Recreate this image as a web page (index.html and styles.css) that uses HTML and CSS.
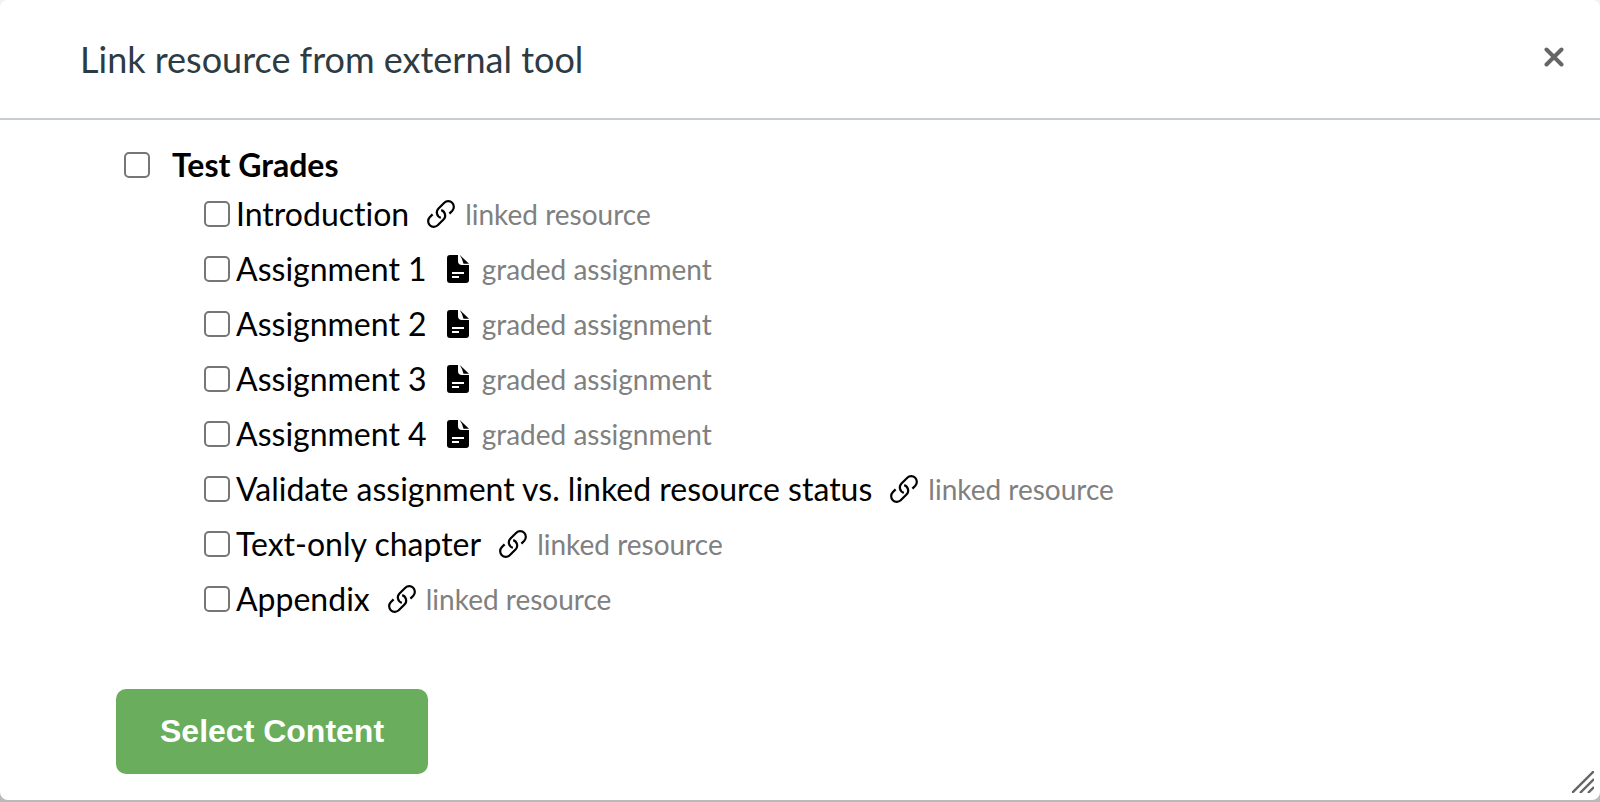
FILE: index.html
```html
<!DOCTYPE html>
<html lang="en">
<head>
<meta charset="utf-8">
<title>Link resource from external tool</title>
<link rel="stylesheet" href="styles.css">
</head>
<body>
<svg class="sprite" aria-hidden="true">
  <symbol id="link" viewBox="0 0 28 28">
    <g fill="none" stroke="currentColor" stroke-width="2.200">
      <path d="M5.600 14.400L2.700 17.300A5.660 5.660 0 0 0 10.700 25.300L16.500 19.500A5.660 5.660 0 0 0 14.200 10.100"/>
      <path d="M22.400 13.600L25.300 10.700A5.660 5.660 0 0 0 17.300 2.700L11.500 8.500A5.660 5.660 0 0 0 13.800 17.900"/>
    </g>
  </symbol>
  <symbol id="file" viewBox="0 0 22 28">
    <path fill="currentColor" fill-rule="evenodd" d="M3 0H11V6Q11 10 15 10H22V25Q22 28 19 28H3Q0 28 0 25V3Q0 0 3 0ZM5 17V19H17V17ZM5 21V23H12V21ZM12.800 0L22 8.800H16.500Q15.500 4 12.800 0Z"/>
  </symbol>
</svg>
<main class="dialog">
  <header class="dialog-header">
    <h1 class="dialog-title">Link resource from external tool</h1>
    <button class="close" type="button" aria-label="Close">
      <svg class="close-icon" viewBox="0 0 20 20"><path d="M2.500 2.500L17.500 17.500M17.500 2.500L2.500 17.500" stroke="currentColor" stroke-width="4" stroke-linecap="round"/></svg>
    </button>
  </header>
  <form class="content">
    <label class="group"><input class="check" type="checkbox"><span>Test Grades</span></label>
    <ul class="items">
      <li class="item"><label class="item-label"><input class="check" type="checkbox"><span>Introduction</span></label><svg class="link-icon"><use href="#link"/></svg><span class="kind">linked resource</span></li>
      <li class="item"><label class="item-label"><input class="check" type="checkbox"><span>Assignment 1</span></label><svg class="file-icon"><use href="#file"/></svg><span class="kind">graded assignment</span></li>
      <li class="item"><label class="item-label"><input class="check" type="checkbox"><span>Assignment 2</span></label><svg class="file-icon"><use href="#file"/></svg><span class="kind">graded assignment</span></li>
      <li class="item"><label class="item-label"><input class="check" type="checkbox"><span>Assignment 3</span></label><svg class="file-icon"><use href="#file"/></svg><span class="kind">graded assignment</span></li>
      <li class="item"><label class="item-label"><input class="check" type="checkbox"><span>Assignment 4</span></label><svg class="file-icon"><use href="#file"/></svg><span class="kind">graded assignment</span></li>
      <li class="item"><label class="item-label"><input class="check" type="checkbox"><span>Validate assignment vs. linked resource status</span></label><svg class="link-icon"><use href="#link"/></svg><span class="kind">linked resource</span></li>
      <li class="item"><label class="item-label"><input class="check" type="checkbox"><span>Text-only chapter</span></label><svg class="link-icon"><use href="#link"/></svg><span class="kind">linked resource</span></li>
      <li class="item"><label class="item-label"><input class="check" type="checkbox"><span>Appendix</span></label><svg class="link-icon"><use href="#link"/></svg><span class="kind">linked resource</span></li>
    </ul>
    <button class="submit" type="button">Select Content</button>
  </form>
  <svg class="grip" viewBox="0 0 22 22" aria-hidden="true"><path d="M0 22L22 0M8 22L22 8M16 22L22 16" stroke="#666" stroke-width="2.400"/></svg>
</main>
</body>
</html>
```
FILE: styles.css
```css
* { box-sizing: border-box; }
body {
  margin: 0;
  padding-bottom: 2px;
  background: linear-gradient(#f2f2f2, #b9b9b9);
  color: #000;
  font-family: Lato, sans-serif;
  font-variant-ligatures: no-common-ligatures;
}
.sprite { position: absolute; width: 0; height: 0; }
.dialog {
  position: relative;
  background: #fff;
  border-radius: 8px;
}
.dialog-header {
  display: flex;
  align-items: center;
  justify-content: space-between;
  height: 120px;
  padding: 0 36px 0 80px;
  border-bottom: 2px solid #c7cdd1;
}
.dialog-title {
  margin: 0;
  color: #2d3b45;
  font-size: 36px;
  font-weight: 400;
  line-height: 48px;
}
.close {
  display: flex;
  padding: 0;
  border: 0;
  margin-bottom: 4px;
  background: none;
  color: #666;
}
.close-icon { width: 20px; height: 20px; }
.content { padding: 23px 116px 26px; }
.group {
  display: flex;
  align-items: center;
  gap: 22px;
  height: 43px;
  padding-left: 8px;
  font-size: 32px;
  font-weight: 700;
}
.check {
  appearance: none;
  flex: none;
  width: 26px;
  height: 26px;
  margin: 0;
  border: 2px solid #767676;
  border-radius: 5px;
  background: #fff;
}
.items {
  margin: 0 0 63px;
  padding: 0 0 0 88px;
  list-style: none;
}
.item {
  display: flex;
  align-items: center;
  height: 55px;
}
.item-label {
  display: flex;
  align-items: center;
  gap: 6px;
  font-size: 32px;
}
.link-icon { width: 28px; height: 28px; margin: 0 10px 0 18px; }
.file-icon { width: 22px; height: 28px; margin: 0 13px 0 20px; }
.kind { color: #808080; font-size: 28px; }
.submit {
  display: block;
  padding: 24px 44px;
  border: 0;
  border-radius: 10px;
  background: #69ad5d;
  color: #fff;
  font: 700 32px/37px "Liberation Sans", Arial, sans-serif;
}
.grip {
  position: absolute;
  right: 6px;
  bottom: 7px;
  width: 22px;
  height: 22px;
}
```
